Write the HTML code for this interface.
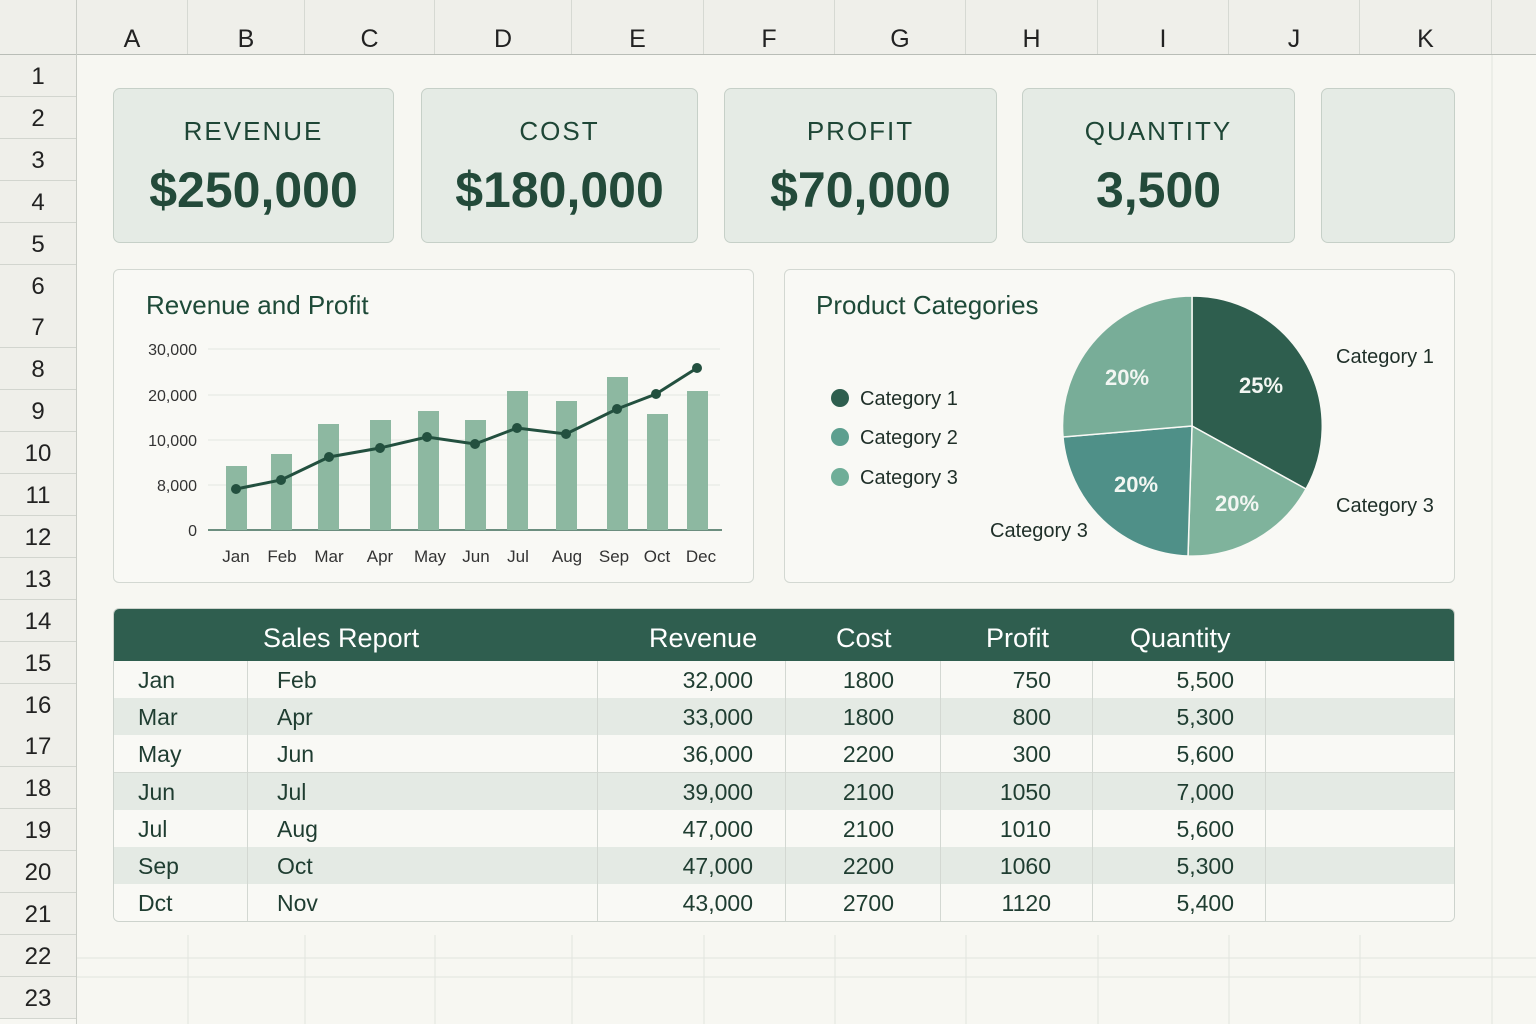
<!DOCTYPE html><html><head><style>
body{margin:0;width:1536px;height:1024px;overflow:hidden;background:#f7f7f2;font-family:"Liberation Sans",sans-serif;color:#1f3d31;position:relative}
.a{position:absolute}
.ch{position:absolute;top:0;height:54px;border-right:1px solid #d6d9d3;background:#efefea;font-size:25px;text-align:center;line-height:78px;color:#222}
.rh{position:absolute;left:0;width:76px;border-bottom:1px solid #d2d5cf;background:#efefea;font-size:24px;text-align:center;color:#222}
.card{position:absolute;top:88px;height:153px;background:#e5ebe5;border:1px solid #c6d0c8;border-radius:7px;text-align:center}
.card .t{margin-top:27px;font-size:26px;letter-spacing:2px;color:#1e4636}
.card .v{margin-top:14px;font-size:50px;font-weight:bold;color:#234a3a}
.panel{position:absolute;top:269px;height:312px;background:#f9f9f5;border:1px solid #d3d8d2;border-radius:6px}
.tb{position:absolute;left:113px;top:608px;width:1340px;height:312px;border:1px solid #cdd3cd;border-radius:6px;overflow:hidden;background:#f9f9f5}
.row{position:absolute;left:0;width:1340px;height:37px;border-bottom:1px solid #d5dad4;font-size:23px;line-height:38px}
.row span{position:absolute}
.vl{position:absolute;top:52px;bottom:0;width:1px;background:#d3d8d2}
</style></head><body>
<div class="a" style="left:0;top:0;width:1536px;height:54px;background:#efefea;border-bottom:1px solid #b9bdb7"></div>
<div class="ch" style="left:77px;width:110px">A</div><div class="ch" style="left:188px;width:116px">B</div><div class="ch" style="left:305px;width:129px">C</div><div class="ch" style="left:435px;width:136px">D</div><div class="ch" style="left:572px;width:131px">E</div><div class="ch" style="left:704px;width:130px">F</div><div class="ch" style="left:835px;width:130px">G</div><div class="ch" style="left:966px;width:131px">H</div><div class="ch" style="left:1098px;width:130px">I</div><div class="ch" style="left:1229px;width:130px">J</div><div class="ch" style="left:1360px;width:131px">K</div>
<div class="a" style="left:76px;top:0;width:1px;height:1024px;background:#c9ccc6"></div>
<div id="rows"></div>
<svg class="a" style="left:77px;top:55px" width="1459" height="969">
<g stroke="#e2e4df" stroke-width="1">
<line x1="0" y1="903" x2="1459" y2="903"/><line x1="0" y1="922" x2="1459" y2="922"/>
<line x1="111" y1="880" x2="111" y2="969"/><line x1="228" y1="880" x2="228" y2="969"/><line x1="358" y1="880" x2="358" y2="969"/><line x1="495" y1="880" x2="495" y2="969"/><line x1="627" y1="880" x2="627" y2="969"/><line x1="758" y1="880" x2="758" y2="969"/><line x1="889" y1="880" x2="889" y2="969"/><line x1="1021" y1="880" x2="1021" y2="969"/><line x1="1152" y1="880" x2="1152" y2="969"/><line x1="1283" y1="880" x2="1283" y2="969"/><line x1="1415" y1="0" x2="1415" y2="969"/>
</g></svg>
<script>
var h='';for(var i=1;i<=23;i++){var t=55+(i-1)*41.9;h+='<div class="rh" style="top:'+t+'px;height:41px;line-height:44px">'+i+'</div>';}
document.getElementById('rows').innerHTML=h;
</script>
<div class="card" style="left:113px;width:279px"><div class="t">REVENUE</div><div class="v">$250,000</div></div>
<div class="card" style="left:421px;width:275px"><div class="t">COST</div><div class="v">$180,000</div></div>
<div class="card" style="left:724px;width:271px"><div class="t">PROFIT</div><div class="v">$70,000</div></div>
<div class="card" style="left:1022px;width:271px"><div class="t">QUANTITY</div><div class="v">3,500</div></div>
<div class="card" style="left:1321px;width:132px"></div>
<div class="panel" style="left:113px;width:639px"></div>
<div class="panel" style="left:784px;width:669px"></div>
<svg class="a" style="left:0;top:0" width="1536" height="600" font-family="Liberation Sans">
<text x="146" y="314" font-size="26" fill="#1e4a38">Revenue and Profit</text>
<g stroke="#e3e6e1"><line x1="208" y1="349" x2="720" y2="349"/><line x1="208" y1="395" x2="720" y2="395"/><line x1="208" y1="440" x2="720" y2="440"/><line x1="208" y1="485" x2="720" y2="485"/></g>
<line x1="208" y1="530" x2="722" y2="530" stroke="#3e6a58" stroke-width="1.5"/>
<g font-size="16" fill="#333" text-anchor="end"><text x="197" y="355">30,000</text><text x="197" y="401">20,000</text><text x="197" y="446">10,000</text><text x="197" y="491">8,000</text><text x="197" y="536">0</text></g>
<g fill="#8db8a1">
<rect x="226" y="466" width="21" height="64"/><rect x="271" y="454" width="21" height="76"/><rect x="318" y="424" width="21" height="106"/><rect x="370" y="420" width="21" height="110"/><rect x="418" y="411" width="21" height="119"/><rect x="465" y="420" width="21" height="110"/><rect x="507" y="391" width="21" height="139"/><rect x="556" y="401" width="21" height="129"/><rect x="607" y="377" width="21" height="153"/><rect x="647" y="414" width="21" height="116"/><rect x="687" y="391" width="21" height="139"/></g>
<polyline fill="none" stroke="#23503f" stroke-width="3" points="236,489 281,480 329,457 380,448 427,437 475,444 517,428 566,434 617,409 656,394 697,368"/>
<g fill="#23503f"><circle cx="236" cy="489" r="5"/><circle cx="281" cy="480" r="5"/><circle cx="329" cy="457" r="5"/><circle cx="380" cy="448" r="5"/><circle cx="427" cy="437" r="5"/><circle cx="475" cy="444" r="5"/><circle cx="517" cy="428" r="5"/><circle cx="566" cy="434" r="5"/><circle cx="617" cy="409" r="5"/><circle cx="656" cy="394" r="5"/><circle cx="697" cy="368" r="5"/></g>
<g font-size="17" fill="#333" text-anchor="middle"><text x="236" y="562">Jan</text><text x="282" y="562">Feb</text><text x="329" y="562">Mar</text><text x="380" y="562">Apr</text><text x="430" y="562">May</text><text x="476" y="562">Jun</text><text x="518" y="562">Jul</text><text x="567" y="562">Aug</text><text x="614" y="562">Sep</text><text x="657" y="562">Oct</text><text x="701" y="562">Dec</text></g>
<text x="816" y="314" font-size="26" fill="#1e4a38">Product Categories</text>
<circle cx="840" cy="398" r="9" fill="#2e5e4e"/><circle cx="840" cy="437" r="9" fill="#5d9f8f"/><circle cx="840" cy="477" r="9" fill="#6fae98"/>
<g font-size="20" fill="#1f2f28"><text x="860" y="405">Category 1</text><text x="860" y="444">Category 2</text><text x="860" y="484">Category 3</text>
<text x="1336" y="363">Category 1</text><text x="1336" y="512">Category 3</text><text x="990" y="537">Category 3</text></g>
<path d="M1192,426 L1192,296 A130,130 0 0,1 1306,489 Z" fill="#2e5e4e" stroke="#f9f9f5" stroke-width="1.5"/>
<path d="M1192,426 L1306,489 A130,130 0 0,1 1188,556 Z" fill="#7fb39c" stroke="#f9f9f5" stroke-width="1.5"/>
<path d="M1192,426 L1188,556 A130,130 0 0,1 1063,437 Z" fill="#4f9088" stroke="#f9f9f5" stroke-width="1.5"/>
<path d="M1192,426 L1063,437 A130,130 0 0,1 1192,296 Z" fill="#78ad98" stroke="#f9f9f5" stroke-width="1.5"/>
<g font-size="22" font-weight="bold" fill="#f2f6f2" text-anchor="middle"><text x="1261" y="393">25%</text><text x="1127" y="385">20%</text><text x="1136" y="492">20%</text><text x="1237" y="511">20%</text></g>
</svg>
<div class="tb">
<div class="a" style="left:0;top:0;width:1340px;height:52px;background:#2f5e4f;color:#fff;font-size:27px;line-height:58px">
<span class="a" style="left:149px">Sales Report</span><span class="a" style="left:535px">Revenue</span><span class="a" style="left:722px">Cost</span><span class="a" style="left:872px">Profit</span><span class="a" style="left:1016px">Quantity</span></div>
<div id="tr"></div>
<div class="vl" style="left:133px"></div><div class="vl" style="left:483px"></div><div class="vl" style="left:671px"></div><div class="vl" style="left:826px"></div><div class="vl" style="left:978px"></div><div class="vl" style="left:1151px"></div>
</div>
<script>
var d=[["Jan","Feb","32,000","1800","750","5,500"],["Mar","Apr","33,000","1800","800","5,300"],["May","Jun","36,000","2200","300","5,600"],["Jun","Jul","39,000","2100","1050","7,000"],["Jul","Aug","47,000","2100","1010","5,600"],["Sep","Oct","47,000","2200","1060","5,300"],["Dct","Nov","43,000","2700","1120","5,400"]];
var s='';for(var i=0;i<7;i++){var r=d[i];s+='<div class="row" style="top:'+(52+i*37.2)+'px;background:'+(i%2?'#e4eae4':'#f9f9f5')+'"><span style="left:24px">'+r[0]+'</span><span style="left:163px">'+r[1]+'</span><span style="right:701px">'+r[2]+'</span><span style="right:560px">'+r[3]+'</span><span style="right:403px">'+r[4]+'</span><span style="right:220px">'+r[5]+'</span></div>';}
document.getElementById('tr').innerHTML=s;
</script>
</body></html>
